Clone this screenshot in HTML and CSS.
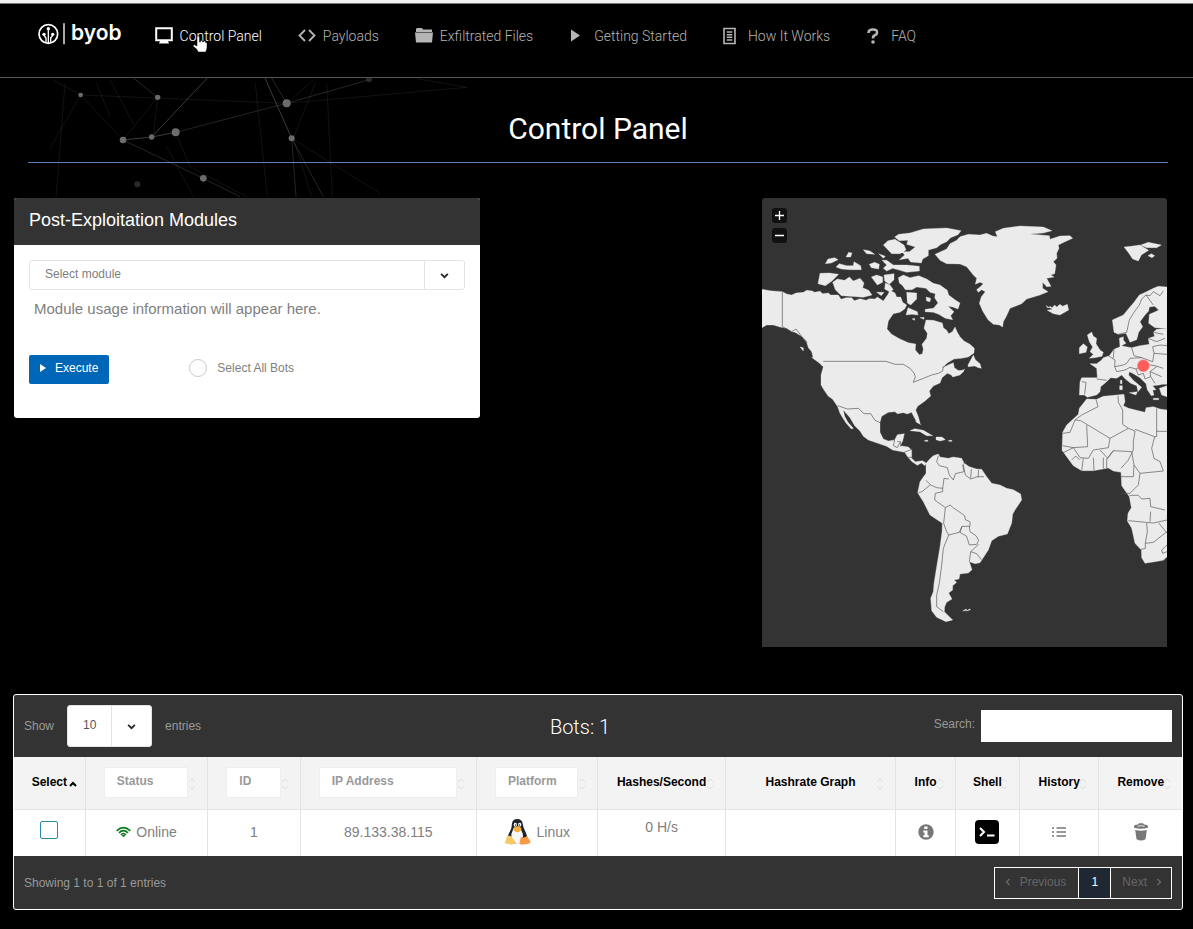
FILE: index.html
```html
<!DOCTYPE html>
<html lang="en">
<head>
<meta charset="utf-8">
<title>Control Panel - BYOB</title>
<link rel="stylesheet" href="styles.css">
</head>
<body>
<header class="topbar">
  <a class="brand" href="#" aria-label="byob">
    <svg class="brand-mark" viewBox="0 0 84 66" aria-hidden="true">
      <g fill="none" stroke="#fff" stroke-width="5">
        <circle cx="31" cy="33" r="28"/>
        <path d="M31 18v42M24 58V45l-6-8M38 58V45l6-8" stroke-width="4"/>
        <path d="M78 1v63" stroke-width="4"/>
      </g>
      <g fill="#fff"><circle cx="31" cy="17" r="5"/><circle cx="18" cy="34" r="5"/><circle cx="44" cy="34" r="5"/></g>
    </svg>
    <span class="brand-name">byob</span>
  </a>
  <nav class="nav">
    <a class="nav-link active" href="#"><svg class="icon" viewBox="0 0 18 18"><path d="M1.2 1.200h15.600v12H1.200z" fill="none" stroke="currentColor" stroke-width="2"/><path d="M5 14h8l1 2.500H4z" fill="currentColor"/></svg>Control Panel
      <svg class="pointer" viewBox="0 0 16 18" aria-hidden="true"><path d="M5 1.500q1.500-1.200 2.500.5V7h1V5.500h2V7h1V6h2v1.500h1.500v5.500l-1.200 4H6l-1-2.500L1 11l1-1.500 3 1.500z" fill="#fff" stroke="#000" stroke-width=".5"/></svg></a>
    <a class="nav-link" href="#"><svg class="icon" viewBox="0 0 18 18"><path d="M7 3 1.500 8.500 7 14M11 3 16.500 8.500 11 14" fill="none" stroke="currentColor" stroke-width="1.800"/></svg>Payloads</a>
    <a class="nav-link" href="#"><svg class="icon" viewBox="0 0 18 18"><path d="M1 5V2l1-1h5l1 1.500h9V5z M0 5.500h18l-1 10H1z" fill="currentColor"/></svg>Exfiltrated Files</a>
    <a class="nav-link" href="#"><svg class="icon" viewBox="0 0 18 18"><path d="M2 2.500v12l9-6z" fill="currentColor"/></svg>Getting Started</a>
    <a class="nav-link" href="#"><svg class="icon" viewBox="0 0 18 18"><path d="M1 1.500h11v15H1z M3.800 5h5.500M3.800 7.700h5.500M3.800 10.300h5.500M3.800 13h5.500" fill="none" stroke="currentColor" stroke-width="1.600"/></svg>How It Works</a>
    <a class="nav-link" href="#"><svg class="icon" viewBox="0 0 18 18"><path d="M2.500 6Q2.500 2.500 7 2.500T11 5.500Q11 7.500 8.800 8.300 7 9 7 11.500" fill="none" stroke="currentColor" stroke-width="2.600"/><circle cx="7" cy="15" r="1.800" fill="currentColor"/></svg>FAQ</a>
  </nav>
</header>
<main>
  <section class="hero">
    <svg class="mesh" viewBox="0 234 1440 360" aria-hidden="true">
      <g fill="none" stroke="#fff">
        <g opacity=".35" stroke-width="2"><path d="M369 420 455 411 527 397M455 411 622 234M795 234 875 415"/></g>
        <g opacity=".22" stroke-width="2"><path d="M527 397 860 310M815 234 860 310 1105 240M369 420 610 535 720 590M400 234 473 292M875 415 888 590M875 415 970 590"/></g>
        <g opacity=".11" stroke-width="2"><path d="M242 285 860 310 1400 262 1250 236M242 285 150 445M242 285 369 420 473 292 461 400M195 250 168 590M766 250 802 590M980 250 997 590M860 310 940 240M945 250 880 415 935 590M500 440 580 590M527 397 570 500 740 590M875 415 1140 580M160 240 242 285M290 250 330 350M330 240 400 370"/></g>
      </g>
      <g fill="#6c6c6c"><circle cx="242" cy="285" r="7"/><circle cx="473" cy="292" r="8"/><circle cx="369" cy="420" r="10"/><circle cx="455" cy="411" r="8"/><circle cx="527" cy="397" r="12"/><circle cx="860" cy="310" r="12"/><circle cx="875" cy="415" r="9"/><circle cx="610" cy="535" r="10"/></g>
      <g fill="#2a2a2a"><circle cx="412" cy="553" r="9"/><circle cx="1107" cy="238" r="9"/></g>
    </svg>
    <h1 class="page-title">Control Panel</h1>
  </section>

  <div class="overview">
    <section class="card">
      <h2 class="card-title">Post-Exploitation Modules</h2>
      <form class="card-body">
        <span class="select-box module-select">
          <select aria-label="Module"><option>Select module</option></select>
          <span class="select-arrow"><svg viewBox="0 0 8 8"><path d="M1 2.500 4 5.500 7 2.500" fill="none" stroke="#222" stroke-width="1.500"/></svg></span>
        </span>
        <p class="usage">Module usage information will appear here.</p>
        <div class="actions">
          <button class="execute" type="button"><svg viewBox="0 0 8 8"><path d="M1 0v8l6-4z" fill="#fff"/></svg>Execute</button>
          <label class="all-bots"><input type="radio" name="all">Select All Bots</label>
        </div>
      </form>
    </section>

    <section class="map" aria-label="Bot map">
      <svg class="world" viewBox="6 9 1215 1347" aria-hidden="true">
        <g fill="#ebebeb" stroke="#ebebeb" stroke-width="1" stroke-linejoin="round">
          <!-- North America -->
          <path d="M6 283 30 287 67 290 80 297 95 300 108 294 130 292 140 286 157 288 163 292 180 289 188 296 205 294 212 300 235 300 243 313 258 308 275 308 283 317 300 311 318 316 328 311 345 312 352 306 370 318 384 298 390 286 405 294 410 306 422 306 428 322 440 330 434 342 420 352 400 356 385 378 381 402 395 418 420 432 445 443 467 447 466 465 478 479 487 476 490 462 486 448 500 430 502 415 492 400 498 375 520 376 547 384 550 398 560 406 566 416 577 410 585 396 592 412 600 425 612 438 630 448 643 460 642 474 625 486 605 490 582 492 562 504 546 519 566 509 580 503 583 518 594 526 612 528 600 540 578 546 574 540 562 535 546 548 540 564 520 573 508 588 512 603 495 618 473 634 467 645 475 665 480 683 472 684 460 662 455 652 442 657 430 653 412 656 405 650 385 652 365 664 360 682 360 712 370 732 385 738 404 735 412 719 433 716 428 738 421 752 445 756 455 765 455 790 466 800 488 797 498 804 495 812 484 804 472 811 456 800 444 787 434 772 398 765 380 754 345 742 325 735 310 724 300 708 284 692 270 668 250 645 254 664 264 682 280 700 274 702 258 684 248 668 240 655 233 635 218 613 205 604 192 585 183 570 183 540 190 515 176 500 160 490 155 470 145 458 140 442 125 424 105 412 95 410 80 400 60 396 40 390 20 390 6 398Z"/>
          <!-- Arctic islands -->
          <path d="M404 126 416 118 450 114 490 102 560 99 603 107 594 119 572 128 560 140 543 148 530 158 505 165 505 182 488 192 484 204 452 201 444 190 418 194 434 180 426 170 448 170 466 156 440 148 444 136 418 137Z M370 150 384 137 405 133 432 150 438 165 420 176 395 176Z M415 248 430 240 450 248 476 242 500 252 520 265 540 270 562 286 566 300 586 315 600 324 594 342 578 336 564 334 582 350 572 362 578 374 556 370 536 358 520 352 495 350 496 343 520 340 534 324 524 308 526 296 510 292 498 280 470 276 456 284 436 284 428 272 418 264Z"/>
          <path d="M180 235 208 234 236 238 216 258 196 272 174 266Z M218 262 232 252 254 256 268 246 280 258 300 250 312 264 308 278 326 286 336 300 310 307 270 304 244 302 226 284Z M196 206 204 192 224 188 234 194 214 204Z M228 216 238 206 260 212 280 212 282 200 302 212 304 224 270 224 244 222Z M258 186 266 172 276 174 272 186Z M310 164 330 168 344 178 320 176Z M328 208 344 202 358 208 356 222 334 218Z M366 196 380 196 400 210 440 210 478 214 478 228 440 232 420 226 398 220 380 228 370 220 380 210Z M334 246 350 240 368 246 368 262 352 270Z M372 240 402 236 402 254 388 268 374 258Z M356 176 376 184 370 190Z M376 264 390 270 400 284 388 290 374 282Z M440 292 470 294 470 312 452 330 442 324Z M498 306 512 310 510 320 500 318Z M444 338 472 350 474 360 456 358 438 360Z M350 292 372 292 364 302Z M120 456l10 2v10z M155 487 170 490 192 507 190 515 178 504Z M456 372l8-2v6zM480 368l12-1v6z"/>
          <path d="M624 510 640 480 646 494 660 506 664 520 655 518 644 513 624 515Z M600 528l14-5-6 8z"/>
          <!-- Greenland -->
          <path d="M525 178 560 162 570 146 590 136 600 125 625 118 660 120 680 115 698 123 712 125 706 110 730 100 780 93 850 96 876 107 850 114 810 117 868 122 870 133 900 123 930 122 938 130 915 140 895 150 897 160 890 175 891 190 880 200 888 210 884 236 872 240 882 246 860 250 873 274 860 275 848 262 848 280 864 290 840 300 820 306 800 312 785 326 750 340 738 366 730 380 728 396 718 390 700 388 684 374 668 348 658 325 664 305 676 290 665 284 655 292 650 284 664 272 670 266 660 262 646 268 650 250 640 240 620 215 600 207 560 206 540 196Z"/>
          <path d="M858 332 864 340 870 334 876 338 884 330 890 336 900 328 908 334 922 328 926 345 900 360 880 356 862 346 878 343Z M1092 156 1112 154 1140 150 1156 160 1166 166 1144 180 1135 198 1118 192 1106 174Z M1142 150 1165 142 1204 150 1190 158 1160 158Z M1164 182l10-6 10 6-8 6z"/>
          <!-- Europe -->
          <path d="M1057 375 1090 360 1108 338 1122 322 1138 300 1156 292 1180 280 1195 274 1221 276V400L1185 398 1166 385 1168 358 1186 350 1196 345 1184 334 1168 336 1166 348 1155 360 1140 380 1148 395 1136 412 1130 434 1110 442 1098 415 1075 418 1062 412Z"/>
          <path d="M1221 400 1190 403 1180 412 1184 424 1165 430 1168 448 1140 452 1115 458 1098 455 1084 452 1098 445 1090 435 1090 425 1078 430 1080 455 1062 463 1048 482 1030 488 1024 496 1010 506 990 506 1010 520 1012 548 965 548 960 560 958 600 973 600 982 607 1010 600 1020 590 1022 575 1040 560 1052 548 1070 550 1085 540 1096 552 1112 565 1130 572 1134 590 1145 577 1120 556 1106 540 1108 530 1120 536 1140 548 1158 566 1162 584 1174 602 1182 600 1178 586 1188 584 1178 572 1198 570 1208 568 1221 568Z M1198 580 1221 572V605L1205 600Z M1108 593 1132 590 1128 600Z M1079 572h8v12h-8zM1081 556h5v10h-5zM1180 610h16v4h-16z"/>
          <path d="M982 420 995 411 1000 424 1010 430 1008 446 1020 465 1030 472 1026 484 1004 488 988 490 1000 478 990 470 998 456 988 440Z M958 458 970 446 982 456 978 472 958 476Z"/>
          <!-- Africa -->
          <path d="M980 612 1010 613 1030 604 1070 600 1092 598 1095 620 1090 632 1106 640 1130 646 1155 652 1158 638 1180 635 1200 642 1221 645V1085L1210 1096 1185 1100 1155 1105 1145 1088 1144 1065 1125 1045 1115 1000 1102 978 1104 955 1114 938 1108 905 1085 872 1083 832 1060 828 1045 819 1000 827 965 827 940 812 920 785 906 766 908 712 920 690 955 658 958 640Z"/>
          <!-- South America -->
          <path d="M498 805 510 791 520 782 535 777 540 786 565 790 580 786 605 790 612 804 628 815 650 822 665 823 680 845 695 865 720 870 740 880 760 884 782 897 785 915 765 945 758 958 755 985 742 1017 715 1024 695 1037 685 1065 660 1103 645 1106 628 1100 636 1124 625 1134 600 1137 597 1152 582 1155 590 1162 578 1172 578 1185 566 1194 576 1212 560 1222 554 1235 553 1250 578 1275 558 1280 530 1267 515 1247 512 1210 520 1190 522 1165 530 1115 540 1055 546 1010 547 985 510 960 490 920 473 893 480 860 498 835Z"/>
          <path d="M450 707 464 701 490 706 518 722 500 722 480 710Z M528 726 546 726 556 734 540 738 528 734Z M494 736h10v3h-10zM566 736h10v3h-10zM466 679l12 2 4 8zM608 1248l10-6 4 4zM620 1248l8-6 4 2z"/>
        </g>
        <!-- Country borders -->
        <g fill="none" stroke="#555" stroke-width="2" stroke-linejoin="round">
          <path d="M67 290V395L95 410 108 402 125 424 142 442M190 499H378L405 508 430 508 450 520 462 534 466 545 460 562 490 550 515 540 535 535 548 528 550 514M233 632 262 642 295 640 312 656 332 656 345 676 360 683M404 735 400 752 412 758 420 742M412 740h10v15M455 763 432 772M445 787h12"/>
          <path d="M535 782 530 800 538 812 562 818 568 840 580 855 586 836 612 830 608 810 622 795M498 856 512 870 530 878 548 880 548 890 526 895 524 915 545 930 556 938 551 985 560 1010 566 1020 550 1060 545 1110 538 1165 530 1200 530 1235 550 1250M548 880 552 850 566 852M475 893 486 890 510 870M556 938 570 930 582 940 600 952 614 962 616 974 630 980 630 994 606 994 598 1012 566 1020M606 994 600 1012 620 1024 628 1050 650 1048 656 1036 648 1022 630 1010 628 994M632 1070 656 1048M628 1100 632 1070 650 1076 664 1094M610 810 616 840 632 852 652 845 672 845M634 822 632 850M656 824 654 848"/>
          <path d="M1075 418 1100 412 1108 375 1122 352 1138 330 1145 312 1158 300 1170 302 1180 290 1200 302 1210 288M1158 300 1180 330M1115 458 1122 482 1145 488 1178 500 1182 475 1178 455 1200 450 1221 452M1045 482 1065 495 1064 515 1070 530 1095 525 1110 517 1128 522 1155 508 1185 512 1210 520M1010 552 1040 556M965 560 978 562 974 598M1064 515 1090 510 1100 505 1110 490 1145 488M1128 522 1135 540 1150 535 1155 552 1172 545 1170 530 1190 515M1172 545 1185 565M1170 530 1205 545M1182 475 1221 478M1165 430 1190 440 1215 430M1180 412 1210 418M1062 463 1060 490"/>
          <path d="M1008 613 1014 635 965 660 945 675 962 677 1050 730 1105 700 1088 688 1088 645 1075 622 1074 602M1105 700 1125 708 1120 740 1120 765M1125 703 1184 725 1190 725V640M1190 709H1221M1184 725 1175 760 1182 790 1200 800 1210 828 1140 835 1122 810 1115 770 1060 767 1045 788M908 715 930 712 945 675M980 690 983 755 940 758 908 752M1050 730 1045 758 1000 765 985 790 960 788 940 758M940 758 908 774M1020 765 1045 792M1060 767 1040 792V820M1030 788V820M1000 788 1002 827M970 790 965 827M935 795l12-12 12 12M1122 810 1120 845 1083 845M1140 835 1135 870 1110 895H1085M1108 901H1135L1145 912 1170 910 1172 935 1215 945M1105 977 1180 984 1221 975M1172 950 1170 980M1160 984 1162 1010 1156 1045V1060L1140 1064M1156 1045 1180 1042 1221 1010M1196 984 1221 1014M1221 1050 1205 1065 1208 1075 1221 1070M1083 820 1105 795 1120 765"/>
        </g>
        <circle cx="1150" cy="512" r="17" fill="#ff5c5c" stroke="#ff5c5c" stroke-opacity=".5" stroke-width="4"/>
      </svg>
      <div class="zoom">
        <button type="button" aria-label="Zoom in"><svg viewBox="0 0 15 15"><path d="M3 7.500h9M7.500 3v9" stroke="#fff" stroke-width="1.300"/></svg></button>
        <button type="button" aria-label="Zoom out"><svg viewBox="0 0 15 15"><path d="M3 7.500h9" stroke="#fff" stroke-width="1.300"/></svg></button>
      </div>
    </section>
  </div>

  <section class="bots">
    <div class="bots-bar">
      <label class="length">Show
        <span class="select-box length-select"><select><option>10</option></select>
        <span class="select-arrow"><svg viewBox="0 0 8 8"><path d="M1 2.500 4 5.500 7 2.500" fill="none" stroke="#222" stroke-width="1.500"/></svg></span></span>
        entries</label>
      <h2 class="bots-title">Bots: 1</h2>
      <label class="search">Search:<input type="search"></label>
    </div>
    <table class="grid">
      <colgroup><col class="c-select"><col class="c-status"><col class="c-id"><col class="c-ip"><col class="c-platform"><col class="c-hashes"><col class="c-graph"><col class="c-info"><col class="c-shell"><col class="c-history"><col class="c-remove"></colgroup>
      <thead><tr>
        <th>Select<svg class="sort on" viewBox="0 0 8 14"><path d="M1 9 4 6 7 9"/></svg></th>
        <th class="filter"><input placeholder="Status" aria-label="Status"><svg class="sort" viewBox="0 0 8 14"><path d="M1 5 4 2 7 5M1 9 4 12 7 9"/></svg></th>
        <th class="filter"><input placeholder="ID" aria-label="ID"><svg class="sort" viewBox="0 0 8 14"><path d="M1 5 4 2 7 5M1 9 4 12 7 9"/></svg></th>
        <th class="filter"><input placeholder="IP Address" aria-label="IP Address"><svg class="sort" viewBox="0 0 8 14"><path d="M1 5 4 2 7 5M1 9 4 12 7 9"/></svg></th>
        <th class="filter"><input placeholder="Platform" aria-label="Platform"><svg class="sort" viewBox="0 0 8 14"><path d="M1 5 4 2 7 5M1 9 4 12 7 9"/></svg></th>
        <th>Hashes/Second<svg class="sort" viewBox="0 0 8 14"><path d="M1 5 4 2 7 5M1 9 4 12 7 9"/></svg></th>
        <th>Hashrate Graph<svg class="sort" viewBox="0 0 8 14"><path d="M1 5 4 2 7 5M1 9 4 12 7 9"/></svg></th>
        <th>Info<svg class="sort" viewBox="0 0 8 14"><path d="M1 5 4 2 7 5M1 9 4 12 7 9"/></svg></th>
        <th>Shell<svg class="sort" viewBox="0 0 8 14"><path d="M1 5 4 2 7 5M1 9 4 12 7 9"/></svg></th>
        <th>History<svg class="sort" viewBox="0 0 8 14"><path d="M1 5 4 2 7 5M1 9 4 12 7 9"/></svg></th>
        <th>Remove<svg class="sort" viewBox="0 0 8 14"><path d="M1 5 4 2 7 5M1 9 4 12 7 9"/></svg></th>
      </tr></thead>
      <tbody><tr>
        <td class="pick"><input class="tick" type="checkbox" aria-label="Select bot 1"></td>
        <td><span class="with-icon"><svg class="wifi" viewBox="0 0 45 33"><g fill="none" stroke="#0b7a1c" stroke-width="5"><path d="M2 13Q22-6 43 13M9 19Q22 6 36 19M15 25Q22 17 30 25"/></g><path d="M17 27q5-4 11 0l-5 5z" fill="#0b7a1c"/></svg>Online</span></td>
        <td>1</td>
        <td>89.133.38.115</td>
        <td><span class="with-icon"><svg class="tux" viewBox="0 0 81 81">
          <path d="M24 16Q26 3 40 3T56 17Q58 30 65 43 73 60 69 72L55 76H25L11 70Q8 55 17 42 24 31 24 16Z" fill="#1d252b"/>
          <path d="M28 32Q39 42 50 32 59 47 57 62 52 75 40 78 28 73 22 61 20 47 28 32Z" fill="#f7f7f5"/>
          <ellipse cx="34" cy="20" rx="5" ry="6" fill="#fff"/><ellipse cx="47" cy="20" rx="5" ry="6" fill="#fff"/><circle cx="35" cy="21" r="2" fill="#111"/><circle cx="46" cy="21" r="2" fill="#111"/>
          <path d="M27 31Q39 19 53 31L49 39Q40 47 31 38Z" fill="#f6b13d"/>
          <path d="M12 53Q20 50 25 60L33 70Q33 78 24 80L3 76Q1 73 5 69 5 60 12 53Z" fill="#f7c863"/>
          <path d="M51 56Q63 62 69 53L75 64 80 72Q78 78 64 79L51 80Q45 76 48 67Z" fill="#f79a45"/></svg>Linux</span></td>
        <td class="rate">0 H/s</td>
        <td></td>
        <td><button class="cell-btn" type="button" aria-label="Info"><svg width="16" height="16" viewBox="0 0 16 16"><circle cx="8" cy="8" r="7.700" fill="#777"/><path d="M6.300 2.500h3.200v2.600H6.300zM5.300 6.500h4.200v4.800h1.300v1.900H5.300v-1.900h1.300V8.400H5.300z" fill="#fff"/></svg></button></td>
        <td><button class="cell-btn" type="button" aria-label="Shell"><svg width="24" height="24" viewBox="0 0 24 24"><rect width="24" height="24" rx="4" fill="#000"/><path d="M5 8l4 4-4 4M12 15.500h7.500" fill="none" stroke="#fff" stroke-width="2"/></svg></button></td>
        <td><button class="cell-btn" type="button" aria-label="History"><svg width="14" height="12" viewBox="0 0 14 12"><path d="M0 2h2M4.500 2H14M0 6h2M4.500 6H14M0 10h2M4.500 10H14" stroke="#777" stroke-width="1.700"/></svg></button></td>
        <td><button class="cell-btn" type="button" aria-label="Remove"><svg width="14" height="18" viewBox="0 0 14 18"><path d="M0 3.500Q0 1.800 4 1.600L5 .3h4l1 1.300q4 .2 4 1.900v1.300q-7 2-14 0zM1.200 7q5.800 1.500 11.600 0l-1.300 9.300q-4.500 2.400-9 0z" fill="#777"/><path d="M3.500 3.300Q7 2 10.500 3.300" fill="none" stroke="#fff" stroke-width=".8"/></svg></button></td>
      </tr></tbody>
    </table>
    <div class="bots-foot">
      <span>Showing 1 to 1 of 1 entries</span>
      <div class="pager">
        <button class="page-btn" type="button"><svg viewBox="0 0 8 8"><path d="M5.500 1 2.500 4 5.500 7" fill="none" stroke="currentColor" stroke-width="1.500"/></svg>Previous</button>
        <button class="page-btn current" type="button">1</button>
        <button class="page-btn" type="button">Next<svg viewBox="0 0 8 8"><path d="M2.500 1 5.500 4 2.500 7" fill="none" stroke="currentColor" stroke-width="1.500"/></svg></button>
      </div>
    </div>
  </section>
</main>
</body>
</html>
```
FILE: styles.css
```css
* { box-sizing: border-box; }
body {
  margin: 0;
  background: #000;
  border-top: 3px solid #f2f2f2;
  color: #808080;
  font: 12px/20px "Liberation Sans", Arial, sans-serif;
}
h1, h2, p { margin: 0; font-weight: 400; }
button, input, select { font: inherit; color: inherit; margin: 0; }
svg { display: block; flex: none; }
a { color: inherit; text-decoration: none; }

.topbar {
  display: flex;
  align-items: flex-start;
  gap: 33px;
  height: 75px;
  padding: 18px 38px 0;
  border-top: 1px solid #777;
  border-bottom: 1px solid #555;
}
.brand { display: flex; align-items: flex-start; gap: 5px; padding-top: 1px; color: #fff; }
.brand-mark { width: 28px; height: 22px; }
.brand-name { font: 600 21px/20px Inter, sans-serif; }
.nav { display: flex; gap: 36px; padding-top: 4px; }
.nav-link {
  position: relative;
  display: flex;
  align-items: center;
  gap: 7px;
  color: #b5b5b5;
  font: 300 14px/20px Roboto, sans-serif;
  white-space: nowrap;
}
.nav-link.active { color: #fff; }
.icon { width: 18px; height: 18px; }
.pointer { position: absolute; left: 37px; top: 9px; width: 16px; height: 18px; }

.hero {
  position: relative;
  margin: 0 25px 0 28px;
  padding: 31px 0 13px;
  border-bottom: 1px solid #5d7fc0;
}
.mesh { position: absolute; left: -28px; top: 0; width: 480px; height: 120px; }
.page-title { position: relative; color: #fff; font: 400 30px/40px Roboto, sans-serif; text-align: center; }

.overview {
  display: grid;
  grid-template-columns: 466fr 405fr;
  column-gap: 282px;
  align-items: start;
  margin: 35px 26px 47px 14px;
  position: relative;
}
.card { background: #fff; border-radius: 3px; overflow: hidden; }
.card-title { padding: 10px 15px 12px; background: #333; color: #fff; font-size: 18px; line-height: 25px; }
.card-body { padding: 15px 15px 34px; }
.select-box { position: relative; display: block; background: #fff; border: 1px solid #e3e3e3; border-radius: 3px; }
.select-box select {
  display: block;
  width: 100%;
  height: 100%;
  padding: 0 15px 2px;
  appearance: none;
  border: 0;
  background: none;
}
.select-arrow {
  position: absolute;
  inset: 0 0 0 auto;
  width: 40px;
  display: grid;
  place-items: center;
  border-left: 1px solid #e3e3e3;
  pointer-events: none;
}
.select-arrow svg { width: 9px; height: 9px; }
.module-select { height: 30px; }
.usage { padding: 9px 5px 0; font-size: 15px; line-height: 20px; }
.actions { display: flex; align-items: center; gap: 80px; margin-top: 36px; }
.execute {
  display: flex;
  align-items: center;
  gap: 8px;
  height: 29px;
  padding: 0 11px 3px 10px;
  border: 0;
  border-radius: 2px;
  background: #0067b8;
  color: #fff;
}
.execute svg { width: 8px; height: 8px; }
.all-bots { display: flex; align-items: center; gap: 10px; padding-bottom: 3px; }
.all-bots input { appearance: none; width: 18px; height: 18px; border: 1px solid #ccc; border-radius: 50%; }

.map { position: relative; background: #333; border-radius: 3px 3px 0 0; overflow: hidden; }
.world { width: 100%; height: auto; }
.zoom { position: absolute; left: 10px; top: 10px; display: grid; gap: 5px; }
.zoom button { width: 15px; height: 15px; padding: 0; border: 0; border-radius: 3px; background: #111; }

.bots { margin: 0 10px 18px 13px; border: 1px solid #fff; border-radius: 3px; background: #333; color: #999; overflow: hidden; }
.bots-bar { display: grid; grid-template-columns: 526fr auto 562fr; align-items: center; height: 62px; padding: 0 10px; }
.length { display: flex; align-items: center; gap: 13px; }
.length-select { width: 85px; height: 42px; color: #555; }
.bots-title { padding-top: 2px; color: #fff; font: 300 20px/24px Roboto, sans-serif; }
.search { display: flex; justify-content: flex-end; gap: 6px; line-height: 28px; }
.search input { width: 191px; height: 32px; border: 0; border-radius: 0; background: #fff; }

.grid { width: 100%; border-collapse: collapse; table-layout: fixed; background: #fff; color: #808080; text-align: center; }
.c-select { width: 6.1%; }
.c-status { width: 10.5%; }
.c-id { width: 7.9%; }
.c-ip { width: 15.1%; }
.c-platform { width: 10.4%; }
.c-hashes { width: 10.9%; }
.c-graph { width: 14.6%; }
.c-info { width: 5.1%; }
.c-shell { width: 5.5%; }
.c-history { width: 6.8%; }
.c-remove { width: 7.1%; }
.grid th { position: relative; height: 52px; padding: 0 0 2px; background: #f3f3f3; color: #000; font-weight: 700; border-bottom: 1px solid #e3e3e3; }
.grid th + th, .grid td + td { border-left: 1px solid #e3e3e3; }
.grid th.filter { padding: 0 19px 0 18px; }
.filter input { display: block; width: 100%; height: 31px; padding: 0 12px 3px; border: 1px solid #eee; background: #fff; }
.filter input::placeholder { color: #999; opacity: 1; }
.sort { position: absolute; right: 11px; top: 20px; width: 8px; height: 14px; fill: none; stroke: #ddd; }
.sort.on { right: 8px; stroke: #000; stroke-width: 2; }
.grid td { height: 47px; padding: 0 0 2px; font-size: 14px; }
.grid td.rate { padding-bottom: 11px; }
.grid td.pick { padding-bottom: 5px; }
.tick { display: block; appearance: none; width: 18px; height: 18px; margin: 0 auto; border: 1px solid #2b8aa5; border-radius: 2px; background: #fff; }
.with-icon { display: flex; justify-content: center; align-items: center; gap: 5px; }
.wifi { width: 15px; height: 12px; }
.tux { width: 27px; height: 27px; }
.cell-btn { display: block; margin: 0 auto; padding: 0; border: 0; background: none; }

.bots-foot { display: flex; justify-content: space-between; align-items: center; height: 53px; padding: 0 10px; }
.pager { display: flex; border: 1px solid #fff; }
.page-btn { display: flex; align-items: center; justify-content: center; gap: 8px; height: 30px; padding: 0 12px 2px 9px; border: 0; background: none; color: #666; }
.page-btn svg { width: 8px; height: 8px; }
.page-btn + .page-btn { border-left: 1px solid #fff; padding: 0 8px 2px 11px; }
.page-btn + .page-btn.current { width: 32px; padding: 0 0 2px; background: #1f2733; color: #fff; }
```
